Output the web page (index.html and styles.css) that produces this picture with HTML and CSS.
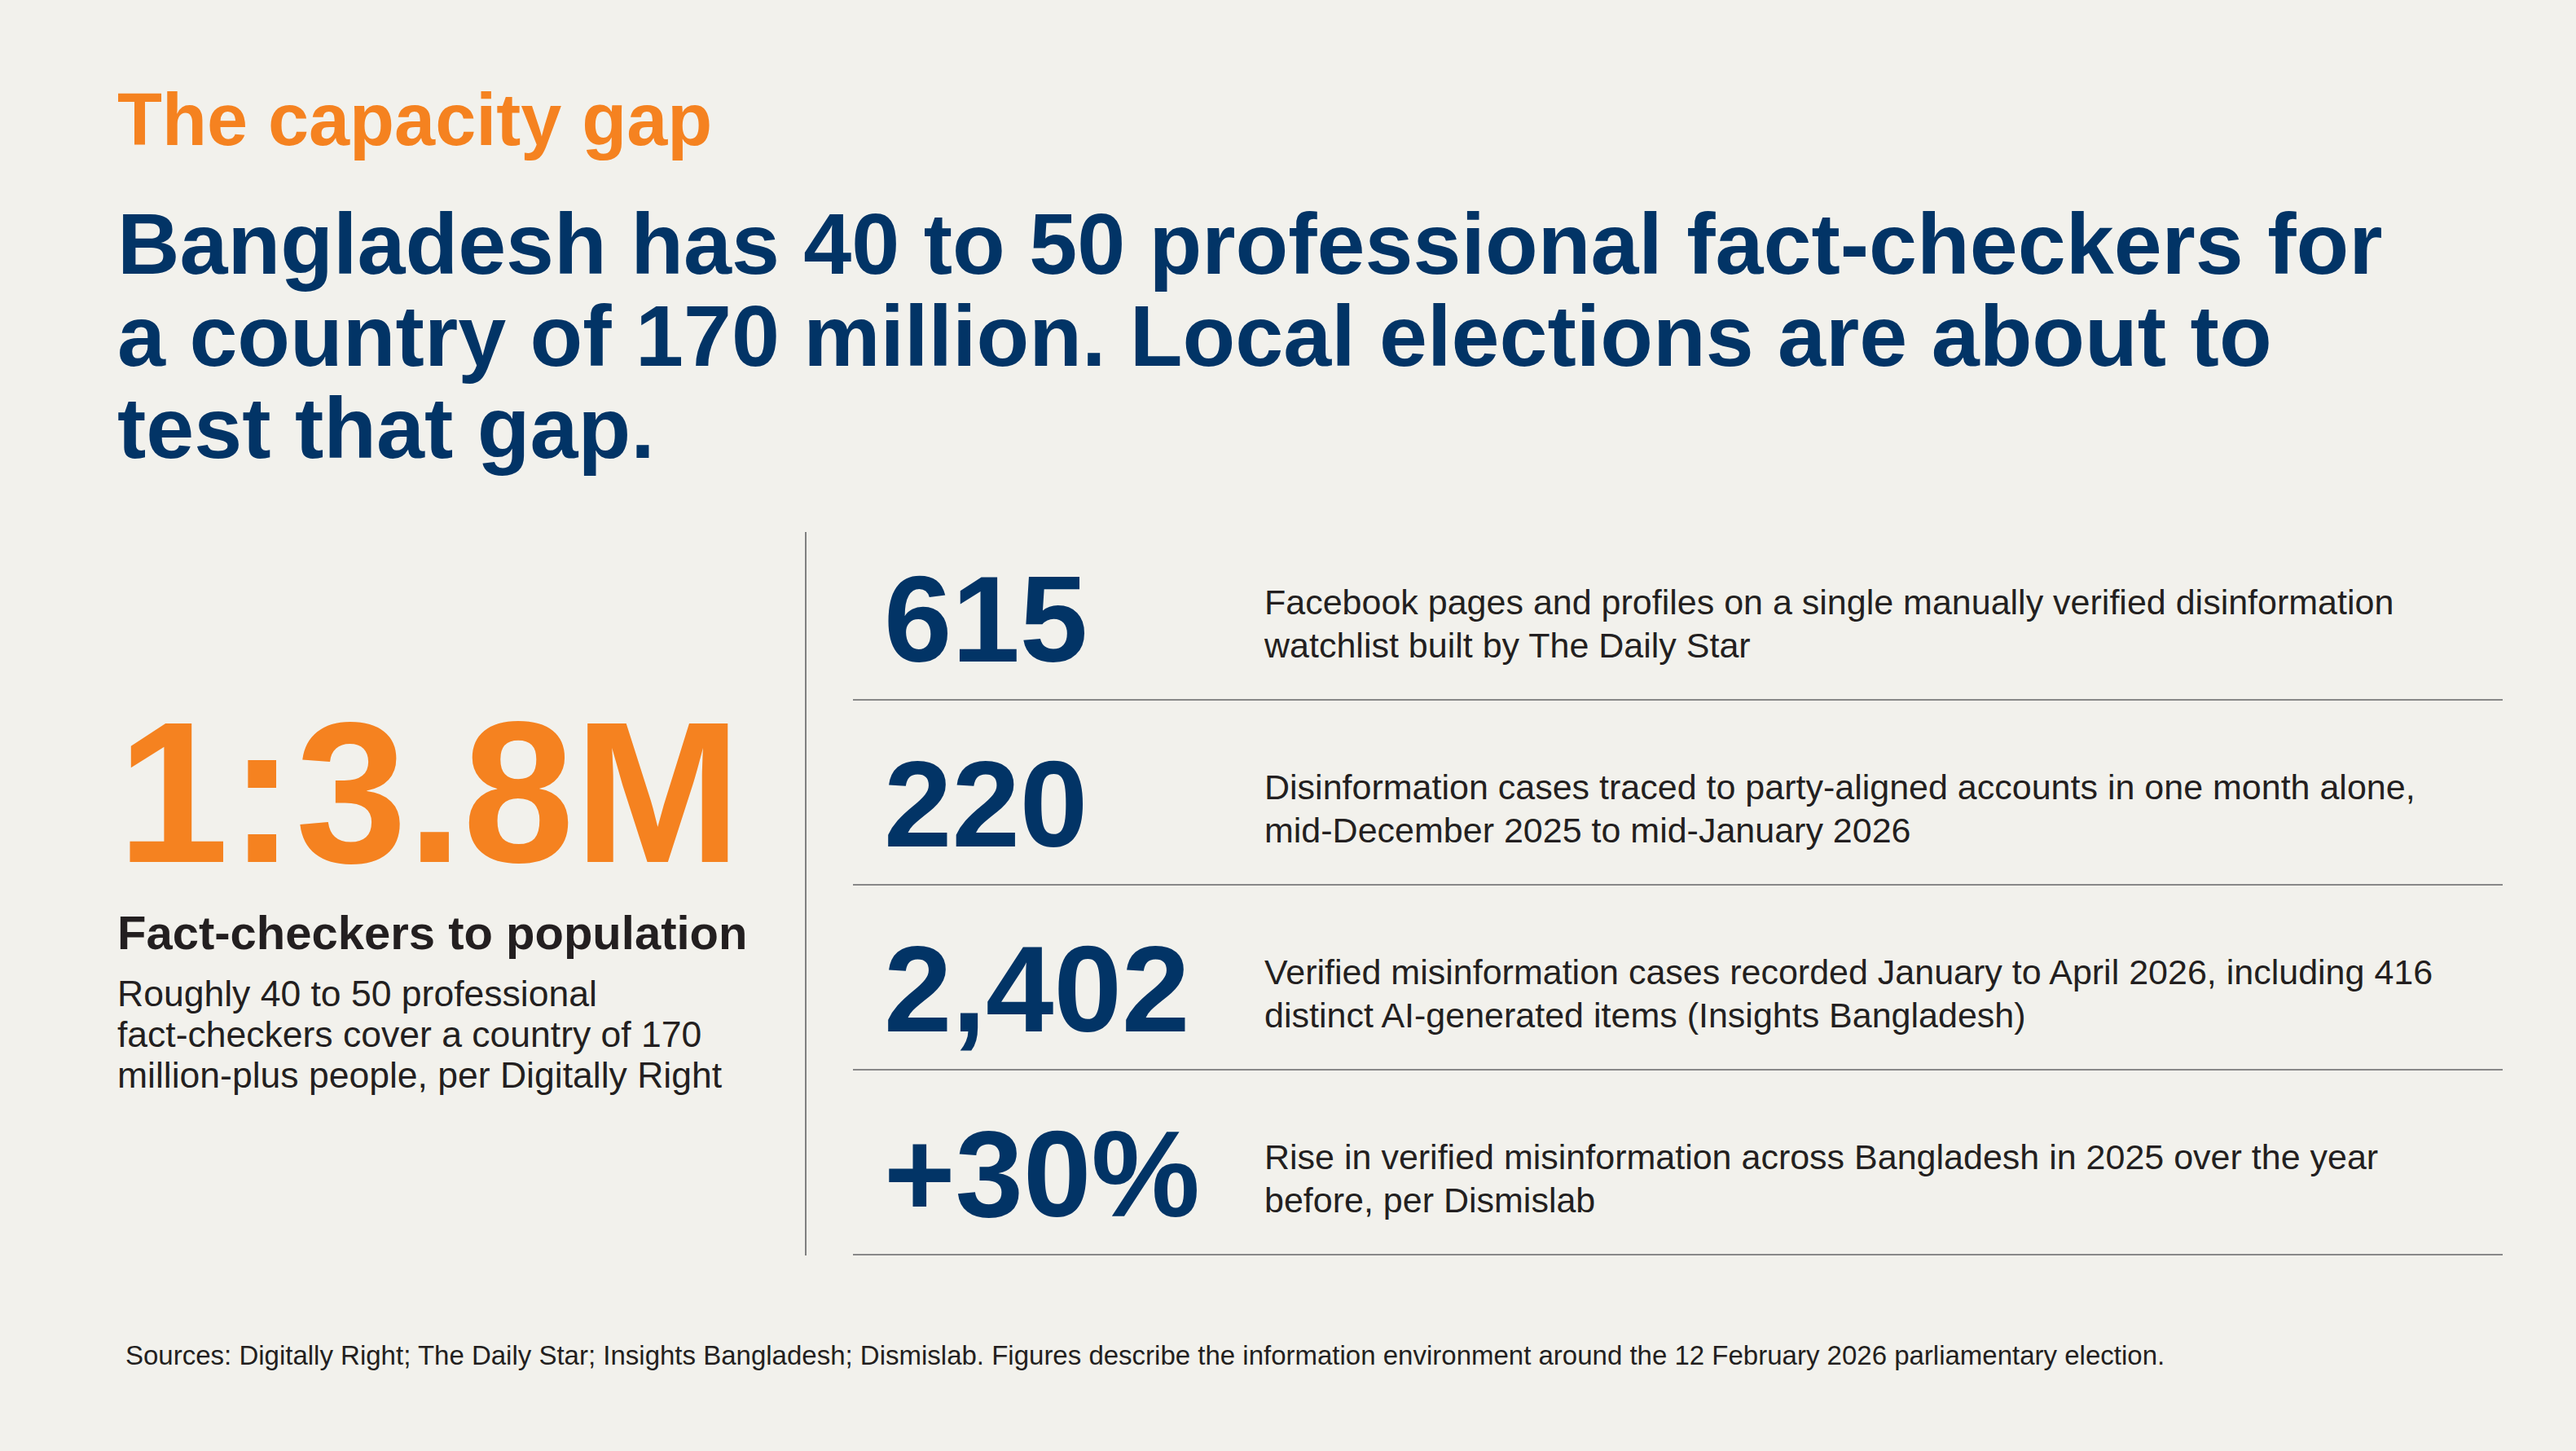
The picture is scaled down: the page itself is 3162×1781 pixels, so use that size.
FILE: index.html
```html
<!DOCTYPE html>
<html lang="en">
<head>
<meta charset="utf-8">
<title>The capacity gap</title>
<link rel="stylesheet" href="styles.css">
</head>
<body>
<main class="page">
  <p class="kicker">The capacity gap</p>
  <h1 class="headline">Bangladesh has 40 to 50 professional fact-checkers for a country of 170 million. Local elections are about to test that gap.</h1>
  <section class="stats">
    <div class="lead">
      <div class="lead-figure">1:3.8M</div>
      <div class="lead-label">Fact-checkers to population</div>
      <p class="lead-text">Roughly 40 to 50 professional <span class="nb">fact-checkers</span> cover a country of 170 <span class="nb">million-plus</span> people, per Digitally Right</p>
    </div>
    <div class="list">
      <div class="row">
        <div class="num">615</div>
        <p class="desc">Facebook pages and profiles on a single manually verified disinformation watchlist built by The Daily Star</p>
      </div>
      <div class="row">
        <div class="num">220</div>
        <p class="desc">Disinformation cases traced to party-aligned accounts in one month alone, mid-December 2025 to mid-January 2026</p>
      </div>
      <div class="row">
        <div class="num">2,402</div>
        <p class="desc">Verified misinformation cases recorded January to April 2026, including 416 distinct AI-generated items (Insights Bangladesh)</p>
      </div>
      <div class="row">
        <div class="num">+30%</div>
        <p class="desc">Rise in verified misinformation across Bangladesh in 2025 over the year before, per Dismislab</p>
      </div>
    </div>
  </section>
  <p class="sources">Sources: Digitally Right; The Daily Star; Insights Bangladesh; Dismislab. Figures describe the information environment around the 12 February 2026 parliamentary election.</p>
</main>
</body>
</html>
```
FILE: styles.css
```css
html, body {
  margin: 0;
  padding: 0;
  background: #f2f1ec;
}

body {
  font-family: "Liberation Sans", Arial, sans-serif;
  color: #231f20;
  overflow: hidden;
}

.nb {
  white-space: nowrap;
}

.page {
  box-sizing: border-box;
  width: 3162px;
  height: 1781px;
  padding: 97px 90px 0 144px;
}

.kicker {
  margin: 0;
  font-size: 90px;
  line-height: 100px;
  font-weight: 700;
  color: #f58220;
}

.headline {
  margin: 46px 0 0;
  max-width: 2820px;
  font-size: 106px;
  line-height: 113px;
  font-weight: 700;
  color: #023466;
}

.stats {
  margin-top: 71px;
  display: grid;
  grid-template-columns: 846px 1fr;
}

.lead {
  box-sizing: border-box;
  border-right: 2px solid #808080;
  padding-right: 44px;
  display: flex;
  flex-direction: column;
  justify-content: center;
}

.lead-figure {
  font-size: 246px;
  line-height: 246px;
  font-weight: 700;
  color: #f58220;
  white-space: nowrap;
  margin-bottom: 15px;
}

.lead-label {
  font-size: 58px;
  line-height: 68px;
  font-weight: 700;
  color: #231f20;
  white-space: nowrap;
  margin-bottom: 16px;
}

.lead-text {
  margin: 0;
  font-size: 44.5px;
  line-height: 50px;
  color: #231f20;
}

.list {
  padding-left: 57px;
  display: flex;
  flex-direction: column;
}

.row {
  display: grid;
  grid-template-columns: 467px 1fr;
  align-items: center;
  padding: 52px 0 23px 38px;
  border-bottom: 2px solid #888888;
}

.row:first-child {
  padding-top: 32px;
}

.num {
  font-size: 150px;
  line-height: 150px;
  font-weight: 700;
  color: #023466;
  white-space: nowrap;
}

.desc {
  margin: 0;
  padding-top: 12px;
  max-width: 1470px;
  font-size: 43px;
  line-height: 53px;
  color: #231f20;
}

.sources {
  margin: 104px 0 0;
  padding-left: 10px;
  font-size: 33px;
  line-height: 38px;
  color: #231f20;
}
```
